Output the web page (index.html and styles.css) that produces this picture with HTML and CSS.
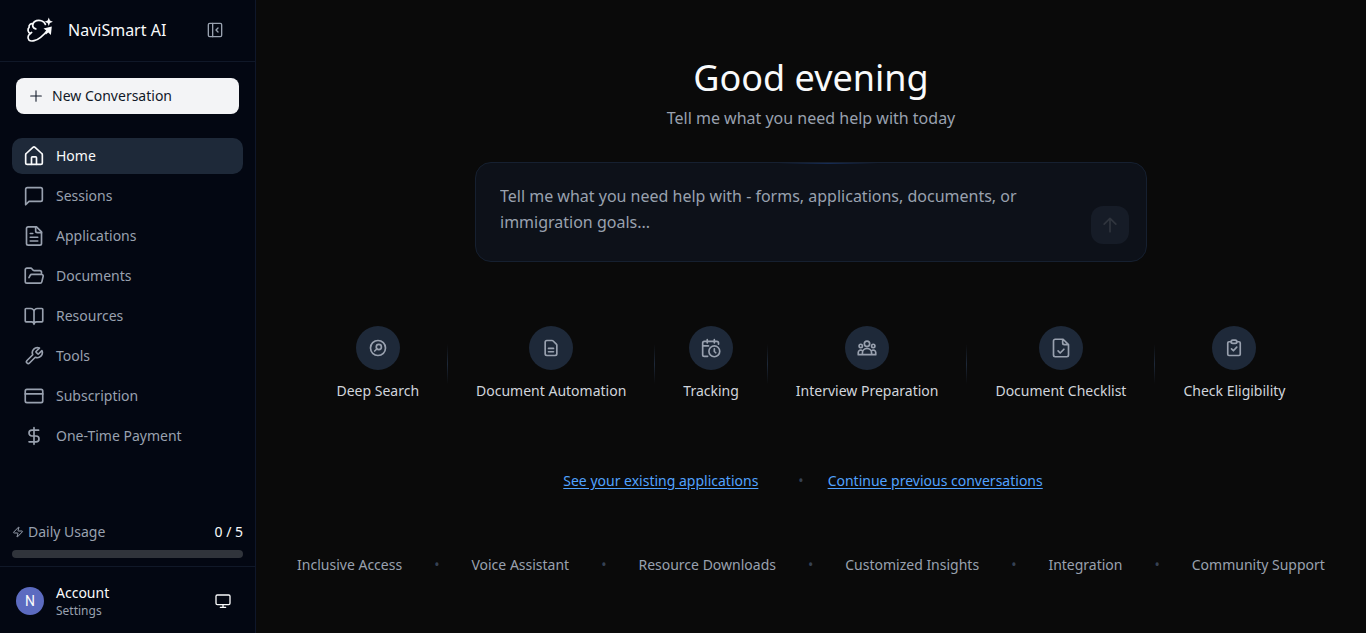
FILE: index.html
```html
<!DOCTYPE html>
<html lang="en">
<head>
<meta charset="utf-8">
<meta name="viewport" content="width=device-width, initial-scale=1">
<title>NaviSmart AI</title>
<link rel="stylesheet" href="styles.css">
</head>
<body>
<div class="app">
  <aside class="sidebar">
    <header class="brand">
      <svg class="logo" viewBox="0 -2 28 28" aria-hidden="true">
        <g fill="none" stroke="currentColor" stroke-width="1.7" stroke-linecap="round" stroke-linejoin="round">
          <path d="M4.400 15.600C1.600 14.200 1.400 11 3.100 9.400C2.500 6.800 5 5.200 7 5.700C8.300 2.700 12.400 1.600 15.400 2.800C17.300 3.400 18.800 4.700 19.400 6.400"/>
          <path d="M6.900 5.900C6.300 8.200 7.400 10.200 9.800 10.900"/>
          <path d="M5.600 14.400C2.200 16.200 1.100 19.800 2.800 21.800C5.200 24.400 10.700 22.400 14.600 19.300C17.600 17 20.600 13.700 22.500 11"/>
        </g>
        <path fill="currentColor" d="M17.500 10.400l8.300-1.900-.9 8.600-2.600-2.500-2.400 1.800-1-1.700 1.700-2zM22.800-.5l1.100 3 3 1.200-3 1.200-1.100 3-1.200-3-2.900-1.200 2.900-1.200z"/>
      </svg>
      <span class="brand-name">NaviSmart AI</span>
      <button class="icon-button collapse" type="button" aria-label="Collapse sidebar">
        <svg class="icon-sm" viewBox="0 0 24 24"><rect x="2" y="2" width="20" height="20" rx="2"/><path d="M8.500 2v20M16.500 9l-3 3 3 3"/></svg>
      </button>
    </header>

    <div class="new-wrap">
      <button class="new-button" type="button">
        <svg class="icon-sm icon-thin" viewBox="0 0 24 24" aria-hidden="true"><path d="M4 12h16M12 4v16"/></svg>
        New Conversation
      </button>
    </div>

    <nav class="nav" aria-label="Main">
      <a class="nav-link active" href="#" aria-current="page">
        <svg class="icon" viewBox="0 0 24 24"><path d="M15 22v-8a1 1 0 0 0-1-1h-4a1 1 0 0 0-1 1v8"/><path d="M2 10.500a2 2 0 0 1 .7-1.500l8-7.300a2 2 0 0 1 2.600 0l8 7.300a2 2 0 0 1 .7 1.500V20a2 2 0 0 1-2 2H4a2 2 0 0 1-2-2z"/></svg>
        Home</a>
      <a class="nav-link" href="#">
        <svg class="icon" viewBox="0 0 24 24"><path d="M22 16.500a2 2 0 0 1-2 2H6l-4 4V4a2 2 0 0 1 2-2h16a2 2 0 0 1 2 2z"/></svg>
        Sessions</a>
      <a class="nav-link" href="#">
        <svg class="icon" viewBox="0 0 24 24"><path d="M15 1H5a2 2 0 0 0-2 2v18a2 2 0 0 0 2 2h14a2 2 0 0 0 2-2V7z"/><path d="M14 1v5a2 2 0 0 0 2 2h5M10.500 9H7.500M16.500 13.500h-9M16.500 18h-9"/></svg>
        Applications</a>
      <a class="nav-link" href="#">
        <svg class="icon" viewBox="0 0 24 24"><path d="m6 14 1.500-2.900A2 2 0 0 1 9.240 10H21a2 2 0 0 1 1.940 2.500l-1.550 6.500a2 2 0 0 1-1.940 1.500H3.500a2 2 0 0 1-2-2v-14a2 2 0 0 1 2-2h4.400a2 2 0 0 1 1.690.9l.81 1.200a2 2 0 0 0 1.670.9H19a2 2 0 0 1 2 2v1"/></svg>
        Documents</a>
      <a class="nav-link" href="#">
        <svg class="icon" viewBox="0 0 24 24"><path d="M12 6v16M2.500 19a1 1 0 0 1-1-1V4a1 1 0 0 1 1-1H8a4 4 0 0 1 4 4 4 4 0 0 1 4-4h5.500a1 1 0 0 1 1 1v14a1 1 0 0 1-1 1H15a3 3 0 0 0-3 3 3 3 0 0 0-3-3z"/></svg>
        Resources</a>
      <a class="nav-link" href="#">
        <svg class="icon" viewBox="0 0 24 24"><path d="M14.700 6.300a1 1 0 0 0 0 1.400l1.600 1.600a1 1 0 0 0 1.400 0l3.770-3.770a6 6 0 0 1-7.940 7.940l-6.910 6.910a2.120 2.120 0 0 1-3-3l6.910-6.910a6 6 0 0 1 7.940-7.940z"/></svg>
        Tools</a>
      <a class="nav-link" href="#">
        <svg class="icon" viewBox="0 0 24 24"><rect x="1.500" y="4" width="21" height="16" rx="2"/><path d="M1.500 9.500h21"/></svg>
        Subscription</a>
      <a class="nav-link" href="#">
        <svg class="icon" viewBox="0 0 24 24"><path d="M12 2v20M17.500 5H9.500a3.500 3.500 0 0 0 0 7h5a3.500 3.500 0 0 1 0 7H6"/></svg>
        One-Time Payment</a>
    </nav>

    <section class="usage">
      <div class="usage-row">
        <svg class="icon-xs" viewBox="0 0 24 24" aria-hidden="true"><path d="M4 14a1 1 0 0 1-.78-1.630l9.900-10.200a.5.5 0 0 1 .86.460l-1.920 6.020A1 1 0 0 0 13 10h7a1 1 0 0 1 .78 1.630l-9.900 10.200a.5.5 0 0 1-.86-.46l1.920-6.020A1 1 0 0 0 11 14z"/></svg>
        <span>Daily Usage</span>
        <span class="usage-count">0 / 5</span>
      </div>
      <div class="usage-bar" role="progressbar" aria-label="Daily Usage" aria-valuemin="0" aria-valuemax="5" aria-valuenow="0"></div>
    </section>

    <footer class="account">
      <span class="avatar">N</span>
      <div class="account-text">
        <span class="account-name">Account</span>
        <span class="account-sub">Settings</span>
      </div>
      <button class="icon-button theme" type="button" aria-label="Use system theme">
        <svg class="icon-sm" viewBox="0 0 24 24"><rect x="1.500" y="3" width="21" height="14.500" rx="2"/><path d="M8 21.500h8M12 17.500v4"/></svg>
      </button>
    </footer>
  </aside>

  <main class="main">
    <h1 class="greeting">Good evening</h1>
    <p class="subtitle">Tell me what you need help with today</p>

    <form class="composer">
      <textarea class="prompt" rows="2" aria-label="Message" placeholder="Tell me what you need help with - forms, applications, documents, or immigration goals..."></textarea>
      <button class="send" type="button" aria-label="Send" disabled>
        <svg class="icon" viewBox="0 0 24 24"><path d="m5 11 7-7 7 7M12 20V4"/></svg>
      </button>
    </form>

    <div class="features">
      <button class="feature" type="button">
        <span class="disc"><svg class="icon" viewBox="0 0 24 24"><circle cx="12" cy="12" r="9"/><circle cx="13" cy="10.800" r="3.100"/><path d="M10.600 13.200 8 15.600"/></svg></span>
        Deep Search</button>
      <span class="divider"></span>
      <button class="feature" type="button">
        <span class="disc"><svg class="icon" viewBox="0 0 24 24"><path d="M5 5a2 2 0 0 1 2-2h6.200a2 2 0 0 1 1.400.6l3.800 3.800a2 2 0 0 1 .6 1.400V19a2 2 0 0 1-2 2H7a2 2 0 0 1-2-2zM9 12.500h6M9 16.500h6"/></svg></span>
        Document Automation</button>
      <span class="divider"></span>
      <button class="feature" type="button">
        <span class="disc"><svg class="icon" viewBox="0 0 24 24"><path d="M21 7.500V6a2 2 0 0 0-2-2H4a2 2 0 0 0-2 2v14a2 2 0 0 0 2 2h4M7.500 2v4M16 2v4M2 9.500h7"/><circle cx="16" cy="16" r="6.500"/><path d="M16 13v3.200l1.700 1.500"/></svg></span>
        Tracking</button>
      <span class="divider"></span>
      <button class="feature" type="button">
        <span class="disc"><svg class="icon" viewBox="0 0 24 24"><circle cx="12" cy="7" r="3.200"/><circle cx="4.500" cy="9.500" r="2"/><circle cx="19.500" cy="9.500" r="2"/><path d="M6.500 20v-2a5.500 5.500 0 0 1 11 0v2zM6.500 20H1.500v-2.500a3 3 0 0 1 5-2.200M17.500 20h5v-2.500a3 3 0 0 0-5-2.200"/></svg></span>
        Interview Preparation</button>
      <span class="divider"></span>
      <button class="feature" type="button">
        <span class="disc"><svg class="icon" viewBox="0 0 24 24"><path d="M14.500 1.500H5a2 2 0 0 0-2 2v17a2 2 0 0 0 2 2h14a2 2 0 0 0 2-2V8zM14 1.500V6a2 2 0 0 0 2 2h5M8.500 15.500l2.500 2.500 4.500-4.500"/></svg></span>
        Document Checklist</button>
      <span class="divider"></span>
      <button class="feature" type="button">
        <span class="disc"><svg class="icon" viewBox="0 0 24 24"><path d="M9 4.500H6a1.500 1.500 0 0 0-1.500 1.500v13.500A1.500 1.500 0 0 0 6 21h12a1.500 1.500 0 0 0 1.500-1.500V6A1.500 1.500 0 0 0 18 4.500h-3M9 13l2.300 2.300L15.300 11"/><rect x="8.500" y="2.500" width="7" height="4" rx="2"/></svg></span>
        Check Eligibility</button>
    </div>

    <div class="shortcuts">
      <a href="#">See your existing applications</a>
      <span class="dot">•</span>
      <a href="#">Continue previous conversations</a>
    </div>

    <div class="perks">
      <span>Inclusive Access</span><span class="dot">•</span>
      <span>Voice Assistant</span><span class="dot">•</span>
      <span>Resource Downloads</span><span class="dot">•</span>
      <span>Customized Insights</span><span class="dot">•</span>
      <span>Integration</span><span class="dot">•</span>
      <span>Community Support</span>
    </div>
  </main>
</div>
</body>
</html>
```
FILE: styles.css
```css
* {
  box-sizing: border-box;
}

body {
  margin: 0;
  background: #0a0a0a;
  color: #f9fafb;
  font-family: "Noto Sans", sans-serif;
  font-size: 14px;
  line-height: 20px;
}

button,
textarea {
  margin: 0;
  padding: 0;
  border: 0;
  background: none;
  color: inherit;
  font: inherit;
}

svg {
  display: block;
  flex: none;
}

.icon,
.icon-sm,
.icon-xs {
  width: 20px;
  height: 20px;
  fill: none;
  stroke: currentColor;
  stroke-width: 2;
  stroke-linecap: round;
  stroke-linejoin: round;
}

.icon-sm {
  width: 16px;
  height: 16px;
}

.icon-xs {
  width: 12px;
  height: 12px;
}

.icon-thin {
  stroke-width: 1.6;
}

.app {
  display: flex;
  min-height: 100vh;
}

/* Sidebar */

.sidebar {
  display: flex;
  flex: none;
  flex-direction: column;
  width: 256px;
  border-right: 1px solid #0f172a;
  background: #030712;
}

.brand {
  display: flex;
  align-items: center;
  height: 62px;
  padding: 0 32px 2px 26px;
  border-bottom: 1px solid #101828;
}

.logo {
  width: 28px;
  height: 28px;
}

.brand-name {
  margin-left: 14px;
  font-size: 16px;
  line-height: 24px;
}

.icon-button {
  display: flex;
  margin-left: auto;
}

.collapse {
  color: #99a1af;
}

.new-wrap {
  padding: 16px 16px 24px;
}

.new-button {
  display: flex;
  align-items: center;
  gap: 8px;
  width: 100%;
  height: 36px;
  padding: 0 12px;
  border-radius: 8px;
  background: #f3f4f6;
  color: #101828;
}

.nav {
  display: flex;
  flex-direction: column;
  gap: 4px;
  padding: 0 12px;
}

.nav-link {
  display: flex;
  align-items: center;
  gap: 12px;
  padding: 8px 12px;
  border-radius: 10px;
  color: #99a1af;
  text-decoration: none;
}

.nav-link.active {
  background: #1e2939;
  color: #f9fafb;
}

.usage {
  margin-top: auto;
  padding: 8px 12px;
}

.usage-row {
  display: flex;
  align-items: center;
  gap: 4px;
  margin-bottom: 8px;
  color: #99a1af;
}

.usage-count {
  margin-left: auto;
  color: #f9fafb;
}

.usage-bar {
  height: 8px;
  border-radius: 4px;
  background: #30343b;
}

.account {
  display: flex;
  align-items: center;
  gap: 12px;
  height: 67px;
  padding: 2px 24px 0 16px;
  border-top: 1px solid #101828;
}

.avatar {
  display: grid;
  width: 28px;
  height: 28px;
  place-items: center;
  border-radius: 50%;
  background: #5c6bc0;
  font-family: Roboto, sans-serif;
}

.account-text {
  display: flex;
  flex-direction: column;
  padding-top: 2px;
}

.account-name {
  line-height: 18px;
}

.account-sub {
  color: #99a1af;
  font-size: 12px;
  line-height: 18px;
}

/* Main */

.main {
  display: flex;
  flex: 1;
  flex-direction: column;
  align-items: center;
  min-width: 0;
  padding: 58px 24px;
}

.greeting {
  margin: 0 0 8px;
  font-size: 36px;
  font-weight: 400;
  line-height: 40px;
}

.subtitle {
  margin: 0 0 32px;
  color: #99a1af;
  font-size: 16px;
  line-height: 24px;
}

.composer {
  position: relative;
  display: flex;
  width: 100%;
  max-width: 672px;
  padding: 20px 17px 17px 24px;
  border: 1px solid #162030;
  border-radius: 16px;
  background: #0d1119;
}

.composer::before {
  position: absolute;
  top: 0;
  left: 45%;
  width: 15%;
  height: 1px;
  background: linear-gradient(to right, transparent, #162c55, transparent);
  content: "";
}

.prompt {
  flex: 1;
  height: 61px;
  min-width: 0;
  margin-right: 44px;
  outline: none;
  font-size: 16px;
  line-height: 26px;
  resize: none;
}

.prompt::placeholder {
  color: #99a1af;
}

.send {
  display: grid;
  align-self: flex-end;
  width: 38px;
  height: 38px;
  place-items: center;
  border-radius: 12px;
  background: #161c27;
  color: #30353e;
}

.features {
  display: flex;
  align-items: center;
  gap: 28px;
  margin-top: 64px;
}

.feature {
  display: flex;
  flex-direction: column;
  align-items: center;
  gap: 10px;
  color: #d1d5dc;
  line-height: 22px;
}

.disc {
  display: grid;
  width: 44px;
  height: 44px;
  place-items: center;
  border-radius: 50%;
  background: #1e2939;
  color: #99a1af;
}

.divider {
  width: 1px;
  height: 40px;
  background: linear-gradient(to bottom, transparent, #1e2939, transparent);
}

.shortcuts {
  display: flex;
  margin-top: 69px;
  padding-right: 16px;
}

.shortcuts a {
  color: #51a2ff;
  text-decoration: underline;
  text-underline-offset: 2px;
}

.dot {
  color: #364153;
}

.shortcuts .dot {
  margin: 0 24px 0 40px;
}

.perks {
  display: flex;
  gap: 32px;
  margin-top: 64px;
  color: #99a1af;
}
```
